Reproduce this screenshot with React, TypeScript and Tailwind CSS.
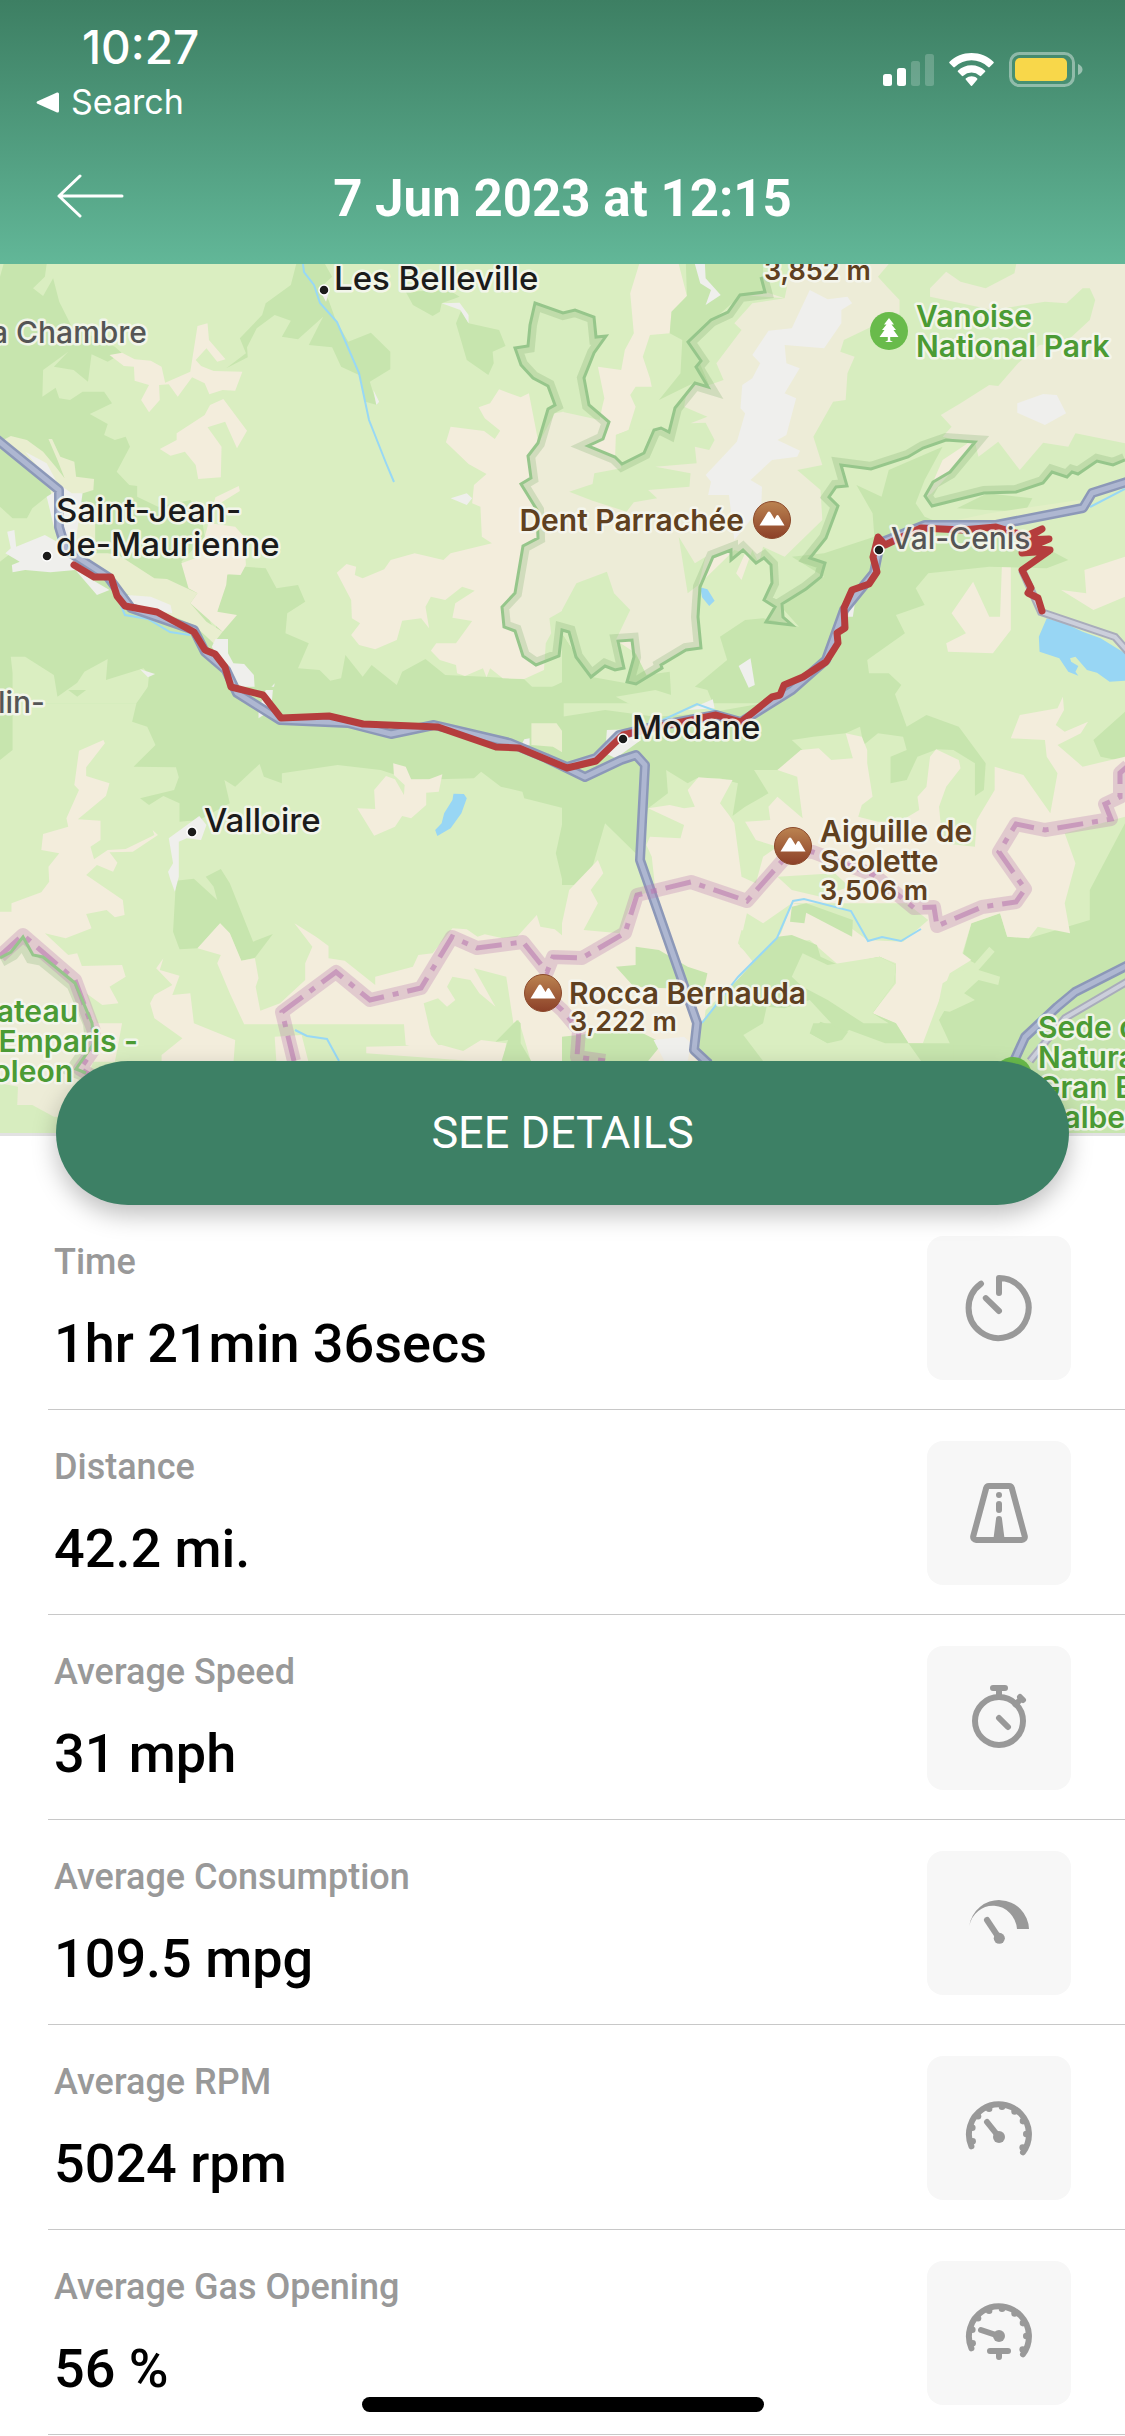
import type { ReactNode } from "react";

type LabelTypes = {
  x: number;
  y: number;
  children: string;
  tone?: "town" | "village" | "peak" | "park";
  small?: boolean;
  end?: boolean;
};

const tones = {
  town: "fill-[#1b1b1b] font-medium",
  village: "fill-[#555555] font-medium",
  peak: "fill-[#5f4020] font-semibold",
  park: "fill-[#4b9b34] font-semibold",
};

const Label = ({ x, y, children, tone = "town", small, end }: LabelTypes) => (
  <text
    x={x}
    y={y}
    textAnchor={end ? "end" : "start"}
    fontSize={small ? 27 : tone === "town" ? 33 : 30}
    className={`${tones[tone]} stroke-[#f6f7f0]/90 stroke-[5px] [paint-order:stroke] [stroke-linejoin:round]`}
  >
    {children}
  </text>
);

const Dot = ({ x, y }: { x: number; y: number }) => (
  <circle cx={x} cy={y} r="5" fill="#1b1b1b" stroke="#fff" strokeWidth="1.5" />
);

const Peak = ({ x, y }: { x: number; y: number }) => (
  <g transform={`translate(${x} ${y})`}>
    <circle r="18.5" fill="url(#peak)" stroke="#8c4a2c" strokeWidth="1" />
    <path d="M-12.5 5.5 -4.5 -7.5Q-3 -9.5 -1.5 -7.5L2.5 -1 4.5 -4.5Q5.5 -5.5 6.5 -4.5L12.5 5.5Z" fill="#fff" />
  </g>
);

const Tree = ({ x, y }: { x: number; y: number }) => (
  <g transform={`translate(${x} ${y})`}>
    <circle r="19" fill="#69bb4b" />
    <path
      d="M0-13 5-6.500 2.500-6.500 7-1H4.500L9.500 6H1.200V9.500L4 11H-4L-1.200 9.500V6H-9.500L-4.500-1H-7L-2.500-6.500-5-6.500Z"
      fill="#fff"
    />
  </g>
);

const parkEdge =
  "M1125 196 1113 201 1097 197 1078 210 1072 208 1067 213 1052 208 1043 219 1016 228 984 229 932 242 925 232 933 218 950 208 975 178 946 176 923 184 908 193 871 205 841 201 847 222 836 223 829 233 838 242 826 274 810 294 825 299 821 313 806 325 782 340 783 353 792 361 766 358 775 343 764 336 772 319 771 301 764 294 756 299 743 286 731 296 731 286 713 293 700 323 698 353 701 384 686 386 661 401 662 404 636 420 627 418 634 393 632 376 618 377 624 404 615 406 605 402 591 413 576 393 569 368 562 366 559 392 536 401 523 392 515 367 504 363 502 343 515 329 523 282 538 274 537 246 521 220 531 214 528 192 538 179 548 145 555 141 548 122 533 114 521 101 515 84 528 82 530 61 535 39 563 49 575 46 594 53 596 73 606 72 594 89 584 114 589 141 609 158 603 175 588 182 615 193 622 200 644 189 654 166 661 164 669 168 675 144 695 119 708 123 696 103 701 97 688 78 711 56 728 48 740 31 765 28 761 13";
const plateauEdge = "M0 694 11 688 23 673 33 691 43 693 75 719 92 759 94 779 76 805 86 809";
const border =
  "M294 797 282 748 336 708 370 736 421 724 452 673 477 684 523 678 547 708 553 693 582 694 625 669 637 631 691 618 747 637 792 586 813 588 874 611 914 644 934 643 937 662 982 643 1016 638 1025 625 999 588 1016 560 1045 566 1111 555 1105 540 1120 533 1120 509 1128 502M543 729 562 746 579 766 577 793 605 797M0 692 23 671 75 716 94 767 94 785 80 805 92 812";
const motorway =
  "M-5 174 59 226 59 263 66 286 108 313 131 344 194 366 205 388 226 406 237 429 280 456 348 459 391 470 434 461 510 479 546 494 585 513 621 496 636 491 645 501 640 596 697 759 694 786 709 800M546 494 567 503 596 494 619 471 652 463 716 451 741 458 792 426 826 396 844 346 874 309 880 279 925 261 996 261 1083 244 1092 229 1130 217M1130 700 1075 728 1057 743 1025 773 1014 797";
const sideRoad = "M1022 306 1041 348 1115 373 1130 390M1130 716 1065 754 1030 797";
const trip =
  "M74 301 94 313 111 313 117 332 125 342 157 348 194 368 205 386 215 390 225 403 231 423 263 431 281 454 329 452 363 460 438 463 496 483 519 484 567 504 596 497 623 471 652 464 716 451 741 458 772 433 780 431 784 421 803 413 826 398 838 379 837 369 845 364 844 344 852 326 869 320 877 308 873 293 878 273 885 281 921 264 962 266 996 263 1026 272 1042 265 1024 276 1049 275 1028 284 1050 286 1022 289 1049 287 1022 306 1031 324 1028 329 1038 334 1042 347";
const streams =
  "M303 0 304 8 314 21 320 39 337 58 359 109 369 156 386 199 394 218M702 759 738 713 777 674 793 637 804 635 851 647 868 677 882 673 901 677 921 665M295 766 307 772 327 775 339 797M652 461 697 440 741 456M111 318 125 351 148 355 170 368 190 371M1090 243 1125 225";

const TripMap = () => (
  <svg
    viewBox="0 0 1125 869"
    className="block w-full bg-[#daeec1] font-['Inter','Liberation_Sans',sans-serif]"
    role="img"
    aria-label="Trip map"
  >
    <defs>
      <linearGradient id="peak" x2="0" y2="1">
        <stop stopColor="#bb8350" />
        <stop offset="1" stopColor="#8c4028" />
      </linearGradient>
      <clipPath id="parkClip">
        <path d={`${parkEdge}V-10H1135V196Z`} />
      </clipPath>
      <clipPath id="plateauClip">
        <path d={`${plateauEdge}L130 869H0Z`} />
      </clipPath>
    </defs>

    {/* north west */}
    <g transform="translate(0 -4) scale(.35906 .33333)">
      <path
        fill="#c7e5ae"
        d="M0 50 10 12H130L125 50 92 85 120 108 148 55 165 125 200 200 320 260 340 280 300 305 255 283 245 365 205 330 150 320 190 275 120 330 118 410 155 383 165 415 195 420 230 395 290 395 312 430 250 462 300 492 290 525 320 540 350 530 362 560 325 635 360 675 382 678V710L440 740 530 720 560 760 570 830 505 905 550 1000 600 1120 605 1055 633 945 680 920 740 925 770 985 830 975 850 1025 800 1060 795 1120 860 1150 830 1225 890 1230 920 1262 950 1255 962 1185 1010 1250 1035 1215 1105 1275 1120 1235 1185 1197 1240 1245 1350 1250 1460 1258 1500 1300 1568 1265V1330H0ZM825 12H905L925 50 895 80 915 120 935 180 970 245 1033 218 1087 275V328L1030 365 1050 435 1018 425 1000 345 950 320 925 262 860 255 900 170 830 238 785 230 810 182 765 165 715 205 688 262 690 292 630 325 685 280 668 235 730 165 740 130 810 75ZM1130 95 1150 135 1205 168 1225 155 1230 130 1280 110 1250 90ZM1285 150 1270 190 1300 300 1360 345 1375 310 1372 275 1408 258 1390 210 1305 190Z"
      />
      <path
        fill="#daeec1"
        d="M0 740 35 775H75L90 745 130 710 150 720V800L210 850 30 880 0 905ZM30 1190H70L150 1245 160 1310 215 1268 235 1235 300 1197 295 1260 400 1225 415 1245 410 1300 380 1330H35V1240Z"
      />
      <path
        fill="#e9eecf"
        d="M0 545 30 528 75 540 120 575 155 620 180 655 160 600 135 537H145L168 590 207 605 212 650 262 657 260 690 200 710 265 760V880H300L330 885 430 955 465 957 550 1000 530 1030 575 1085 620 1115 595 1150 540 1095 440 1050 350 1000 180 870 140 690Z"
      />
      <path
        fill="#f3eddc"
        d="M305 285 340 278 375 298 420 302 450 320 460 368 530 335 550 198 578 190 582 240 628 298 605 305 575 265 545 300 560 318 595 333 675 335 655 392 620 390 583 403 570 370 535 352 495 410 470 373 443 375 445 420 415 457 393 420 415 375 375 362 373 320 345 318ZM445 567 492 540V520L570 465 585 435 622 417 688 512 660 565 627 485 578 502 617 560 615 652 552 657 545 615 515 575 475 587ZM600 712 665 678 668 693 605 735 585 790 655 800 680 830 685 915 670 945 633 943 630 975 605 1055 660 1065 620 1115 530 1030 550 1000 525 985 505 910 555 890ZM938 938 965 912 992 920 988 945 1010 955 1070 928 1088 900 1155 880 1235 900 1255 880 1370 850 1342 830 1338 740 1315 730 1320 675 1355 642 1305 612 1242 547 1255 500 1348 513 1378 537 1393 512 1350 475 1333 442 1365 430 1390 388 1450 412 1473 400 1500 550 1545 460 1570 455V1050L1530 1075 1535 1120 1520 1150 1515 1230 1460 1257 1400 1255 1365 1225 1355 1252 1345 1225 1295 1248 1273 1240 1270 1215 1225 1200 1200 1172 1215 1150 1270 1150 1315 1083 1260 1073 1268 1030 1322 992 1287 980 1240 1020 1200 1010 1185 1040 1195 1105 1173 1075 1120 1082 1105 1140 1045 1168 1000 1155 978 1125 1003 1090 980 1075 978 1020Z"
      />
      <path
        fill="#efefec"
        d="M70 575 130 610 160 670 200 700 230 700 210 850 150 800 130 710 160 690ZM20 815 40 810 45 860 125 825 215 880 240 930 210 930 140 937 70 930 35 937 33 915 55 905 15 880 30 865ZM210 930 305 990 270 1005ZM355 1005 420 1010 475 1035 480 1060 380 1045ZM600 1137H635V1180L650 1210 680 1212 707 1245 710 1295 740 1300 765 1270 755 1330 640 1260 590 1160ZM390 1228 432 1242 412 1252ZM1230 130 1280 128 1305 165V190L1282 150ZM1255 715 1300 700 1315 715 1300 735ZM895 100H915L908 125ZM1040 390 1056 425 1048 435Z"
      />
    </g>

    {/* north east */}
    <g transform="translate(562 -4) scale(.35906 .33333)">
      <path
        fill="#f3eddc"
        d="M0 455 105 480 112 440 118 415 100 320 165 330 175 270 200 220 190 100 215 12H325L348 108 305 155 300 220 245 225 225 290 245 355 250 380 205 380 190 405 205 440 185 510 150 525 148 590 165 620 225 590 260 510 300 515 310 445 370 370 410 375 350 245 430 180 495 105 565 95 620 115 640 12H910L880 50 905 80 940 120V160L785 240 775 275 815 290 795 340 790 420 755 425 700 530 725 615 655 630 720 690 725 780 620 890 560 860 548 910 530 870 500 960 485 940 510 880 480 870 380 975 375 1050 385 1165 340 1170 275 1220 235 1245 205 1180 150 1140 165 1225 100 1200 50 1150 0 1110ZM1025 85 1070 35 1110 65 1180 85 1260 40 1265 12H1568V550L1430 520 1410 560 1340 548 1275 630 1215 545 1160 590 1150 547 1085 635 1030 700 1015 710 1060 600 1130 550 1060 530 1085 500 1055 465 1110 430 1190 375 1215 378 1270 310 1330 255 1400 250 1470 180 1485 120 1470 85 1450 85 1405 130 1345 125 1200 150 1025 110ZM1455 930 1568 890V1010L1480 1050 1390 990 1460 1000ZM1225 920H1250V1110L1200 1180 1075 1175 1070 1150 1125 1120 1085 1060 1145 965 1190 1070 1220 1070Z"
      />
      <path
        fill="#c7e5ae"
        d="M345 12H560V95L495 105 460 160 350 245 385 305 410 375 365 370 270 420 330 340 335 240 300 220 305 155 348 108ZM640 890 730 880 870 830 865 760 820 675 890 710 910 630 1060 560 1010 660 985 730 1010 770 1100 810 1210 800 1290 830 1410 900 1350 925 1190 920 1020 940 985 985 1010 1035 930 1065 955 1120 850 1200 855 1240 910 1240 945 1275 910 1330H420L405 1290 370 1280 460 1200 440 1130 510 1080 560 1075 660 1100 610 1040 730 950ZM0 1120 80 1250 180 1270 205 1180 235 1245 300 1235 305 1330H0ZM1100 745 1185 700 1310 715 1290 755 1180 750Z"
      />
      <path
        fill="#daeec1"
        d="M150 525 200 505 300 515 310 440 365 370 345 410 340 440 405 470 358 490 400 488 425 540 410 570 370 560 375 610 260 620 358 640 355 680 240 690 265 715 200 727 180 755 85 722 20 695 85 672 90 640 165 625ZM0 1050 40 970 125 935 145 1000 190 1050 150 1140 165 1225 80 1250 0 1120ZM350 1000 325 830 370 910 400 890 380 975ZM410 190 500 105 620 115 530 130 480 190 500 210 430 310 450 360 410 375 380 300 350 245Z"
      />
      <path fill="#e2efc6" d="M1190 760 1440 720 1455 745 1200 792 1100 780Z" />
      <path
        fill="#98d6f4"
        d="M1350 1075 1400 1090 1450 1115 1500 1135 1568 1180V1262L1525 1265 1490 1238 1462 1230 1430 1190 1415 1195 1418 1205 1438 1218 1430 1235 1438 1247 1410 1235 1385 1195 1330 1175 1328 1130ZM385 982 405 988 425 1022 410 1038 390 1012Z"
      />
    </g>

    {/* south west */}
    <g transform="translate(0 426) scale(.35906 .33333)">
      <path
        fill="#c7e5ae"
        d="M412-10H1570V355L1460 325 1455 305 1395 290 1340 245 1320 265 1145 270 1060 240 940 225 785 250V280L735 260 723 222 655 290 625 270 640 340 555 390 500 395V340L455 318 415 345 390 325 485 300 498 262 490 232 372 230 433 165 410 110 368 95 380 40ZM0 0H35V180L0 210ZM140 0H240L215 20 190 0ZM490 572 540 566 605 630 595 590 573 560 615 537 640 580 705 755 760 732 710 803 672 812 640 730 613 700 550 775 500 778 482 725ZM1568 390 1548 490 1568 580Z"
      />
      <path
        fill="#f3eddc"
        d="M288 150 220 182 207 285 220 300 185 385 190 410 120 432 115 480 165 490 135 530 137 575 115 607 32 640V665H0V1180L50 1190 48 1245 90 1245 150 1280H200L260 1115H320L340 1000H270L240 910 285 945 330 940 305 890 350 860 340 825 228 828 215 790 190 795 125 730 183 745 255 715 240 672 297 660 320 682 347 675 342 630 240 555 270 525 315 545 327 518 305 487 370 485 440 435 425 420 430 435 350 477 300 480 262 508 252 470 280 450V392L217 388 295 318 305 280 240 258V232L292 160ZM820 700 880 740 915 768V805L960 812 1045 885V860L1150 830 1165 795 1205 790 1260 715 1300 718 1330 740 1350 733 1400 745 1440 740 1495 675 1505 710 1545 718 1570 740V1120H1480L1445 990 1430 1000 1410 860 1320 835 1380 950 1335 910 1310 870 1260 860 1245 890 1268 930 1245 950 1220 925 1180 940 1200 1035 1235 1087 1130 1065 1125 1003H680L640 910 605 820 615 795 550 775 613 700 640 730 672 812 710 805 720 865 712 890 725 962 780 940 850 870 850 820 870 770ZM435 835 455 805 445 840 500 857 480 915 530 910 540 1000 655 1050 650 1120H450V1095L508 1045 430 985 418 940 430 915 480 885ZM765 1040 840 1035 860 1120H770ZM1020 1070 1230 1065 1290 1083 1340 1050 1410 1060 1400 1120 1020 1090ZM1095 220 1130 230 1145 268H1195L1232 253 1222 305 1187 308V345L1145 385 1120 378 1100 410 1042 437 995 355 1045 357 1042 300 1075 258 1100 268 1125 315 1127 285 1097 255Z"
      />
      <path fill="#c7e5ae" d="M1440 990 1450 1000V1060L1483 1120H1395L1415 1050 1380 1055Z" />
      <path fill="#e9eecf" d="M1480 100H1550L1570 130V190L1540 170 1480 165Z" />
      <path
        fill="#efefec"
        d="M555 378 575 405 560 450 520 445 498 455V560L487 605 475 570 468 545 482 520 470 445ZM740 0H760L755 60 720 85V60ZM1460 148 1475 145V165L1450 170Z"
      />
      <path
        fill="#98d6f4"
        d="M1263 311 1292 312 1300 325 1285 370 1255 415 1218 438 1212 420 1230 400 1237 370 1260 330Z"
      />
    </g>

    {/* south east */}
    <g transform="translate(562 426) scale(.35906 .33333)">
      <path
        fill="#c7e5ae"
        d="M0 80 120 60 260 80 400 70 560 40 640-10H920L960 110 1015 75 1105 110 1180 220 1175 300 1150 318V220L1090 180 1045 178 990 200 960 270 915 280V200L960 180 950 140 880 130 840 165 830 110 790 130 700 140 640 150 680 190 600 240 535 240 575 310 510 350 475 378 490 280 440 265 375 265 350 280 290 240 295 310 240 355 215 500 120 400 70 585H0ZM1568 65 1480 150 1500 200 1568 215ZM1568 400 1470 600V690L1300 745 1240 740 1220 670 1140 700 1115 800 1150 820 1125 850 1050 990 1080 1060 1090 1120H1000V1330H1568Z"
      />
      <path
        fill="#f3eddc"
        d="M0 700 20 600 100 510 115 550 80 600 100 640 60 720 160 730 200 620 260 600 250 500 235 465 245 440 330 445 340 405 240 355 300 345 340 355 370 350 350 300 380 262 475 270 440 340 465 375 480 400 500 560 540 580 560 500 600 470 540 450 510 395 580 390 575 350 600 320 670 385 655 260 600 240 665 180 715 175 750 210 810 205 790 130 835 140 850 180V220L865 320 835 345 825 380 880 395 940 395 995 360 990 320 1015 290 1025 200 1042 178 1105 210 1110 235 1070 290 1050 350 1060 460 1150 470 1155 390 1205 300V230L1285 255 1360 370 1380 250 1350 200 1345 150 1250 145 1275 75 1380 55 1395 20 1398 60 1375 105 1400 125 1465 95 1445 130 1380 165 1450 230 1568 200V380L1400 430 1430 520 1400 640 1415 730 1325 710 1300 745 1240 740 1220 670 1140 700 1115 790 1140 810 1080 850 1040 960 1005 1060H965L930 1000 865 970 930 880V820L885 800 770 825 690 750 600 760 500 720 490 760 535 820 480 880 400 960 380 1120H0Z"
      />
      <path
        fill="#c7e5ae"
        d="M205 770 270 780 350 830 405 850 395 900 200 890 150 830 205 825ZM600 740 640 735 710 765 720 800 770 825 885 800 930 825 925 880 865 970 930 1000 965 1060 1090 1060V1120H380L385 1000 480 880ZM0 1040 90 1030 190 1010 280 1060 240 1113H0Z"
      />
      <path
        fill="#daeec1"
        d="M670 790 740 825 885 800 930 825 925 880 865 970 910 1000 840 1000 740 930 670 890 640 860ZM505 1035 560 1000 570 950 620 955 690 930 750 1000 700 1000 690 1030 740 1060 800 1020 900 1060 965 1060 1000 1113H560ZM515 670 500 740 495 770 540 810 610 730 640 640 960 640 1020 690 950 755 850 750 800 710 690 650 640 640 560 700ZM1060 880 1120 840 1150 820 1190 770 1205 785 1160 840 1220 860 1215 885 1160 870 1120 910 1150 930 1080 965 1045 960ZM150 20 260 0 320 20 300 60 220 60ZM600 560 760 550 800 590 720 620 640 600Z"
      />
      <path fill="#c7e5ae" d="M640 650 680 640 810 690 808 740 680 668 675 700 635 695ZM690 1030 720 995 797 1025 780 1050 740 1060Z" />
      <path fill="#efefec" d="M255 1050 340 1040 360 1060 350 1113H285ZM125 120 190 118 220 150 150 205 120 190ZM350 60 420 28 425 55Z" />
    </g>

    {/* protected areas */}
    <g clipPath="url(#parkClip)">
      <rect width="1125" height="450" className="fill-[#c8e8b4]/12" />
      <path d={parkEdge} className="fill-none stroke-[#7dab6a]/25 stroke-[14px]" />
    </g>
    <g clipPath="url(#plateauClip)">
      <rect y="660" width="130" height="209" className="fill-[#c8e8b4]/12" />
      <path d={plateauEdge} className="fill-none stroke-[#7dab6a]/25 stroke-[18px]" />
    </g>
    <path d={parkEdge} className="fill-none stroke-[#96c68b] stroke-[3px]" />

    {/* glaciers */}
    <path
      transform="translate(562 -4) scale(.35906 .33333)"
      fill="#efefed"
      d="M370 12H398L400 55 442 105 400 135 415 90 385 70ZM690 90 740 118 795 110 808 130 778 150V190L730 265 620 255 625 310 662 325 620 400 652 415 625 525 600 540 663 572 655 590 585 600 525 660 557 680 555 740 480 840 465 705H407L415 665 400 645 487 545 510 460 497 445 502 375 530 355 552 310 530 285 575 212 640 205ZM1268 430 1340 402 1378 405 1404 460 1345 495 1268 458ZM492 1218 525 1195 537 1275 520 1283ZM800 1020 820 1000 810 1070 797 1070Z"
    />

    <path d={streams} className="fill-none stroke-[#98d8f5] stroke-2" />
    <path d={sideRoad} className="fill-none stroke-[#a9acbb] stroke-[8px]" />
    <path d={sideRoad} className="fill-none stroke-[#cccfdb] stroke-[4px]" />
    <path d={motorway} className="fill-none stroke-[#8c98b8] stroke-[10px] [stroke-linejoin:round]" />
    <path d={motorway} className="fill-none stroke-[#aeb7d1] stroke-[5px] [stroke-linejoin:round]" />

    <path d={border} className="fill-none stroke-[#b979b0]/30 stroke-[14px] [stroke-linejoin:round]" />
    <path d={border} strokeDasharray="26 9 6 9" className="fill-none stroke-[#b979b0]/60 stroke-[5px]" />
    <path d={plateauEdge} className="fill-none stroke-[#96c68b] stroke-[3px]" />
    <path d={trip} className="fill-none stroke-[#b53d3d] stroke-[7px] [stroke-linecap:round] [stroke-linejoin:round]" />

    <Dot x={324} y={26} />
    <Dot x={47} y={292} />
    <Dot x={192} y={568} />
    <Dot x={623} y={475} />
    <Dot x={879} y={286} />
    <Peak x={772} y={256} />
    <Peak x={793} y={582} />
    <Peak x={543} y={729} />
    <Tree x={889} y={67} />
    <Tree x={1013} y={812} />

    <Label x={334} y={26}>Les Belleville</Label>
    <Label x={147} y={79} tone="village" end>La Chambre</Label>
    <Label x={56} y={258}>Saint-Jean-</Label>
    <Label x={56} y={292}>de-Maurienne</Label>
    <Label x={45} y={449} tone="village" end>lin-</Label>
    <Label x={204} y={568}>Valloire</Label>
    <Label x={632} y={475}>Modane</Label>
    <Label x={891} y={285} tone="village">Val-Cenis</Label>
    <Label x={744} y={267} tone="peak" end>Dent Parrachée</Label>
    <Label x={764} y={16} tone="peak" small>3,852 m</Label>
    <Label x={916} y={63} tone="park">Vanoise</Label>
    <Label x={916} y={93} tone="park">National Park</Label>
    <Label x={820} y={578} tone="peak">Aiguille de</Label>
    <Label x={820} y={608} tone="peak">Scolette</Label>
    <Label x={820} y={636} tone="peak" small>3,506 m</Label>
    <Label x={569} y={740} tone="peak">Rocca Bernauda</Label>
    <Label x={570} y={767} tone="peak" small>3,222 m</Label>
    <Label x={78} y={758} tone="park" end>Plateau</Label>
    <Label x={138} y={788} tone="park" end>Emparis -</Label>
    <Label x={73} y={818} tone="park" end>Goleon</Label>
    <Label x={1038} y={774} tone="park">Sede del</Label>
    <Label x={1038} y={804} tone="park">Naturale</Label>
    <Label x={1038} y={834} tone="park">Gran Bosco</Label>
    <Label x={1044} y={864} tone="park">Salbertrand</Label>
  </svg>
);

const Icon = ({ children }: { children: ReactNode }) => (
  <svg
    viewBox="0 0 24 24"
    className="size-[72px] fill-none stroke-[#999999] stroke-2 [stroke-linecap:round] [stroke-linejoin:round]"
    aria-hidden="true"
  >
    {children}
  </svg>
);

const Dial = () => (
  <>
    <path d="M2.800 17.100A10 10 0 1 1 20 19.100" />
    <g className="fill-[#999999] stroke-none">
      <circle cx="3.1" cy="10.9" r="1.1" />
      <circle cx="3.2" cy="15.4" r="1.1" />
      <circle cx="5" cy="7.1" r="1.1" />
      <circle cx="8.7" cy="4.6" r="1.1" />
      <circle cx="13" cy="3.9" r="1.1" />
      <circle cx="17.2" cy="5.5" r="1.1" />
      <circle cx="20" cy="8.7" r="1.1" />
      <circle cx="21.1" cy="13" r="1.1" />
      <circle cx="19.9" cy="17.5" r="1.1" />
    </g>
  </>
);

const stats = [
  {
    label: "Time",
    value: "1hr 21min 36secs",
    icon: <path d="M12 7V2A10 10 0 1 1 6 3.900M7.600 8.700 12 13" />,
  },
  {
    label: "Distance",
    value: "42.2 mi.",
    icon: (
      <>
        <path d="M8.700 3h6.600a1 1 0 0 1 1 .8l4.300 16a1 1 0 0 1-1 1.200H4.400a1 1 0 0 1-1-1.200l4.300-16a1 1 0 0 1 1-.8ZM12 6V6M12 9v2" />
        <path d="M11 14a1 1 0 0 1 2 0l.9 7h-3.800Z" className="fill-[#999999] stroke-none" />
      </>
    ),
  },
  {
    label: "Average Speed",
    value: "31 mph",
    icon: (
      <>
        <circle cx="12" cy="13" r="8" />
        <path d="M10 2h4M12 2v3M19 5 20 6M17.500 7.500 19.500 5.500M12 12l3 3" />
      </>
    ),
  },
  {
    label: "Average Consumption",
    value: "109.5 mpg",
    icon: (
      <>
        <path d="M2.100 13A10 10 0 0 1 22 14H18A8.050 8.500 0 0 0 2.100 13Z" className="fill-[#999999] stroke-none" />
        <path d="M8 11 12 17" />
        <circle cx="12.1" cy="17.1" r="1.85" className="fill-[#999999] stroke-none" />
      </>
    ),
  },
  {
    label: "Average RPM",
    value: "5024 rpm",
    icon: (
      <g transform="translate(0 1)">
        <Dial />
        <path d="M8 9 12 14" />
        <circle cx="12" cy="14" r="2" className="fill-[#999999] stroke-none" />
      </g>
    ),
  },
  {
    label: "Average Gas Opening",
    value: "56 %",
    icon: (
      <>
        <Dial />
        <path d="M6 11 12 13M9 18h6M12 18v2" />
        <circle cx="12" cy="13" r="2" className="fill-[#999999] stroke-none" />
      </>
    ),
  },
];

const StatusIcons = () => (
  <div className="flex items-center gap-[15px]">
    <svg width="51" height="33" viewBox="0 0 51 33" className="fill-white" aria-hidden="true">
      <rect y="21" width="9" height="12" rx="2.5" />
      <rect x="14" y="15" width="9" height="18" rx="2.5" />
      <rect x="28" y="8" width="9" height="25" rx="2.5" opacity=".2" />
      <rect x="42" y="1" width="9" height="32" rx="2.5" opacity=".2" />
    </svg>
    <svg width="45" height="33" viewBox="0 0 45 33" className="fill-white" aria-hidden="true">
      <path d="M22.500 0C31 0 38.700 3.300 44.400 8.700a1 1 0 0 1 0 1.500L40.700 14a1 1 0 0 1-1.500 0 24.300 24.300 0 0 0-33.400 0 1 1 0 0 1-1.500 0L.6 10.200a1 1 0 0 1 0-1.500C6.300 3.300 14 0 22.500 0Z" />
      <path d="M22.500 12.200c5.200 0 9.900 2 13.400 5.200a1 1 0 0 1 0 1.600l-3.700 3.700a1 1 0 0 1-1.500 0 12.300 12.300 0 0 0-16.400 0 1 1 0 0 1-1.500 0L9.100 19a1 1 0 0 1 0-1.600c3.500-3.200 8.200-5.200 13.400-5.200Z" />
      <path d="M22.500 23.300c2.100 0 4 .7 5.500 1.900.5.400.5 1 .1 1.500L23.300 32.500a1 1 0 0 1-1.600 0L16.900 26.700c-.4-.5-.4-1.100.1-1.500a9 9 0 0 1 5.500-1.900Z" />
    </svg>
    <svg width="74" height="35" viewBox="0 0 74 35" fill="none" aria-hidden="true">
      <rect x="1.5" y="1.5" width="63" height="32" rx="9" stroke="#fff" strokeOpacity=".4" strokeWidth="3" />
      <path d="M69 12c2.700 1 4.500 3 4.500 5.500S71.700 22 69 23Z" fill="#fff" fillOpacity=".45" />
      <rect x="6" y="6" width="52" height="23" rx="5" fill="#f8d74a" />
    </svg>
  </div>
);

const Header = () => (
  <header className="flex h-[264px] flex-col bg-linear-to-b from-[#3d7f63] to-[#62b798] text-white">
    <div className="flex items-start justify-between pt-5 pr-[42px] pl-9 font-['Inter','Liberation_Sans',sans-serif]">
      <div>
        <div className="pl-[46px] text-[46px] leading-[54px] font-medium">10:27</div>
        <a href="#search" className="flex items-center gap-3 pt-2 text-[34px] leading-[40px]">
          <svg width="23" height="21" viewBox="0 0 23 21" className="fill-white" aria-hidden="true">
            <path d="M1 9.500 21 .5Q23 0 23 2V19Q23 21 21 20.500L1 11.500Q0 10.500 1 9.500Z" />
          </svg>
          Search
        </a>
      </div>
      <div className="pt-8">
        <StatusIcons />
      </div>
    </div>
    <div className="grid grid-cols-[1fr_auto_1fr] items-center px-14 pt-10">
      <button type="button" aria-label="Back" className="justify-self-start pb-1.5">
        <svg width="68" height="44" viewBox="0 0 68 44" className="fill-none stroke-white stroke-3" aria-hidden="true">
          <path d="M66 22H3M24 2 3 22 24 42" strokeLinejoin="round" strokeLinecap="round" />
        </svg>
      </button>
      <h1 className="text-[51px] leading-[74px] font-bold">7 Jun 2023 at 12:15</h1>
    </div>
  </header>
);

export default function App() {
  return (
    <div className="min-h-screen bg-white font-['Roboto','Liberation_Sans',sans-serif]">
      <Header />
      <main>
        <div className="border-b-3 border-[#e2e2e2]">
          <TripMap />
        </div>
        <div className="relative -mt-[75px] px-14">
          <button
            type="button"
            className="block h-36 w-full rounded-full bg-[#3d8065] text-[45px] text-white shadow-[0_10px_24px_rgba(0,0,0,0.25)]"
          >
            SEE DETAILS
          </button>
        </div>
        <ul className="pl-12">
          {stats.map(({ label, value, icon }) => (
            <li
              key={label}
              className="flex h-[205px] items-center justify-between border-b border-[#c8c8c8] pt-0.5 pr-[54px] pl-1.5"
            >
              <div>
                <div className="text-[36px] leading-[44px] font-medium text-[#999999]">{label}</div>
                <div className="pt-7 text-[54px] leading-[64px] font-medium text-black">{value}</div>
              </div>
              <div className="flex size-36 items-center justify-center rounded-2xl bg-[#f7f7f7]">
                <Icon>{icon}</Icon>
              </div>
            </li>
          ))}
        </ul>
      </main>
      <div className="fixed bottom-6 left-1/2 h-[15px] w-[402px] -translate-x-1/2 rounded-full bg-black" />
    </div>
  );
}
